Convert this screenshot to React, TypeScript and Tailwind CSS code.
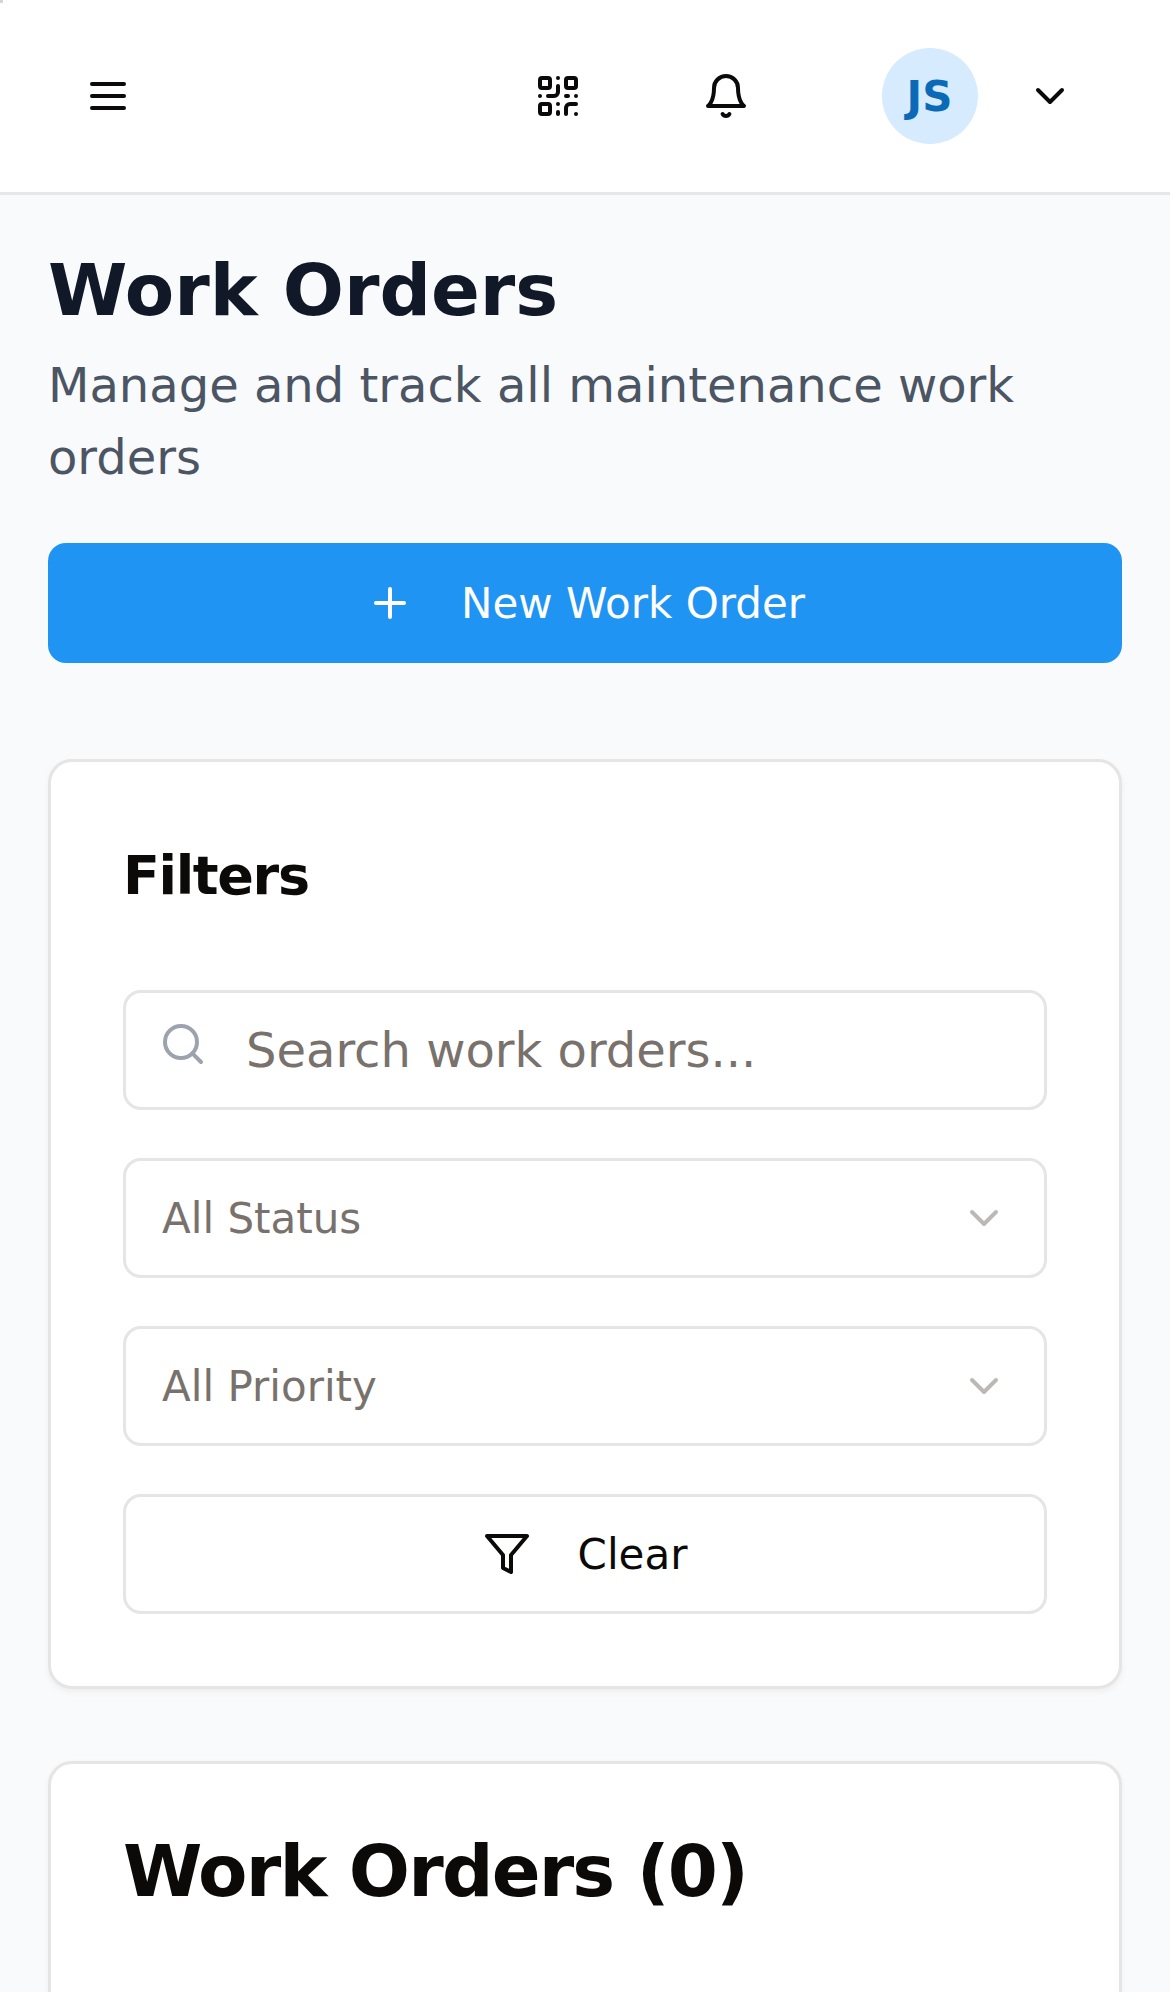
import { QrCode, ChevronDown, Plus, Search } from "lucide-react";

const field = "flex h-[120px] w-full items-center rounded-[18px] border-[3px] border-[#e7e5e4] bg-white";
const stroke = { width: 48, height: 48, viewBox: "0 0 24 24", fill: "none", stroke: "currentColor", strokeWidth: 2, strokeLinecap: "round", strokeLinejoin: "round" } as const;

export default function App() {
  return (
    <div className="relative h-[1992px] w-[1170px] overflow-hidden bg-[#f9fafb] font-['DejaVu_Sans',sans-serif] text-[#0c0a09]">
      <span className="absolute top-0 left-0 size-[3px] bg-[#d4d4d4]" />
      <header className="flex h-[195px] items-center justify-between border-b-[3px] border-[#e5e7eb] bg-white pr-[96px] pl-[84px]">
        <button aria-label="Menu">
          <svg {...stroke}><path d="M4 6h16M4 12h16M4 18h16" /></svg>
        </button>
        <div className="flex items-center">
          <QrCode size={48} />
          <svg {...stroke} className="ml-[120px]">
            <path d="M6 8a6 6 0 0 1 12 0c0 7 3 9 3 9H3s3-2 3-9" />
            <path d="M10.3 21a1.94 1.94 0 0 0 3.4 0" />
          </svg>
          <span className="ml-[132px] flex size-24 items-center justify-center rounded-full bg-[#d6ebfd] pr-px text-[42px] font-bold text-[#0b6ab8]">JS</span>
          <ChevronDown size={48} className="ml-12" />
        </div>
      </header>
      <main className="px-12 pt-12">
        <h1 className="text-[72px] leading-[94px] font-bold text-[#111827]">Work Orders</h1>
        <p className="mt-3 text-[48px] leading-[72px] text-[#4b5563]">Manage and track all maintenance work orders</p>
        <button className="mt-[50px] flex h-[120px] w-full items-center justify-center rounded-[18px] bg-[#2094f3] pl-px text-[42px] text-white">
          <Plus size={48} className="mr-[47px]" />New Work Order
        </button>
        <section className="mt-24 h-[930px] rounded-[24px] border-[3px] border-[#e7e5e4] bg-white p-[72px] shadow-[0_3px_6px_rgba(0,0,0,0.05)]">
          <h2 className="text-[54px] leading-[84px] font-bold tracking-[-1.35px]">Filters</h2>
          <div className="mt-[72px] flex flex-col gap-12">
            <div className={field + " pl-[33px] text-[48px] text-[#78716c]"}>
              <Search size={48} color="#9ca3af" className="-mt-3 mr-[39px]" />Search work orders...
            </div>
            <div className={field + " justify-between px-9 text-[42px] text-[#78716c]"}>All Status<ChevronDown size={48} color="#bbb8b5" /></div>
            <div className={field + " justify-between px-9 text-[42px] text-[#78716c]"}>All Priority<ChevronDown size={48} color="#bbb8b5" /></div>
            <button className={field + " justify-center text-[42px]"}>
              <svg {...stroke} className="mr-[47px]"><path d="M22 3H2l8 9.46V19l4 2v-8.54z" /></svg>Clear
            </button>
          </div>
        </section>
        <section className="mt-[72px] h-[600px] rounded-[24px] border-[3px] border-[#e7e5e4] bg-white p-[72px] shadow-[0_3px_6px_rgba(0,0,0,0.05)]">
          <h2 className="text-[72px] leading-[70px] font-bold tracking-[-1.8px]">Work Orders (0)</h2>
        </section>
      </main>
    </div>
  );
}
